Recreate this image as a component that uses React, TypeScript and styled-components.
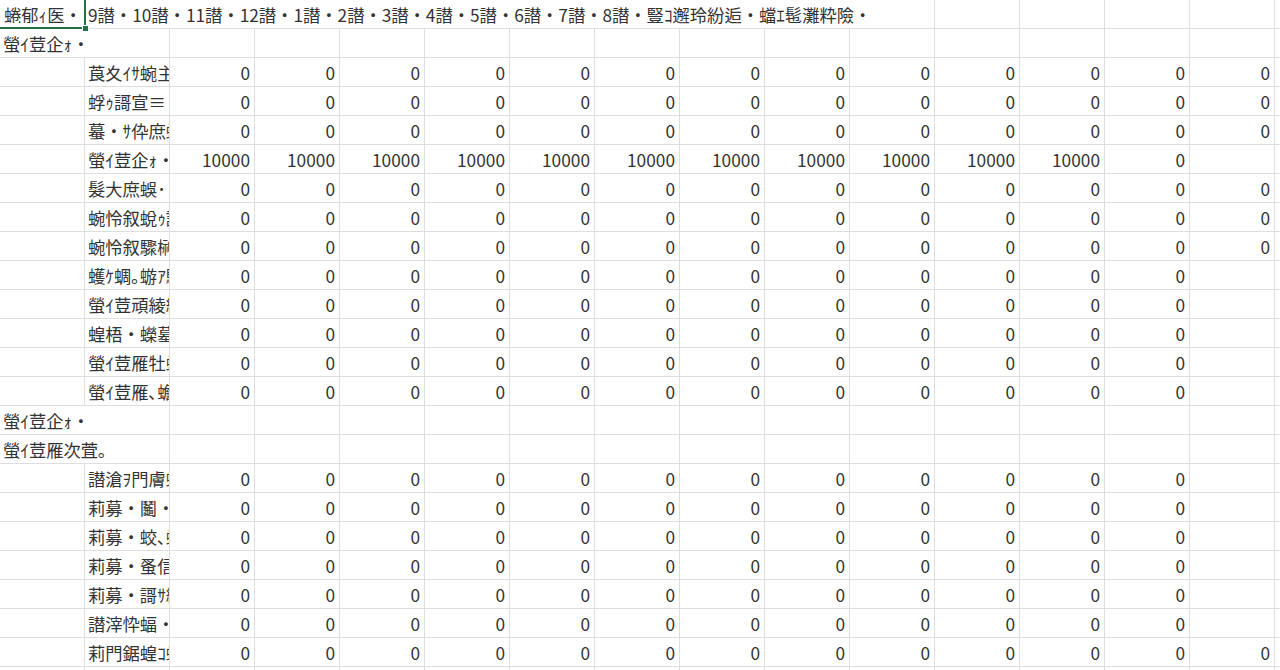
import React from "react";
import styled, { createGlobalStyle } from "styled-components";

const Global = createGlobalStyle`
  html, body { margin: 0; padding: 0; background: #ffffff; overflow: hidden; }
  body { font-family: "Noto Sans CJK JP", "Noto Sans", sans-serif; }
`;

const Sheet = styled.div`
  display: grid;
  grid-template-columns: repeat(16, 85px);
  grid-auto-rows: 29px;
  width: 1280px;
  height: 670px;
  overflow: hidden;
  font-family: "Noto Sans CJK JP", "Noto Sans", sans-serif;
  font-size: 17.3px;
  color: #333333;
  background: #ffffff;
`;

const Cell = styled.div<{ $span?: number; $num?: boolean; $noRight?: boolean }>`
  box-sizing: border-box;
  grid-column: span ${(p) => p.$span ?? 1};
  border-right: 1px solid ${(p) => (p.$noRight ? "transparent" : "#dedede")};
  border-bottom: 1px solid #dedede;
  display: flex;
  align-items: center;
  justify-content: ${(p) => (p.$num ? "flex-end" : "flex-start")};
  padding: ${(p) => (p.$num ? "1px 4px 0 0" : "1px 0 0 3px")};
  white-space: nowrap;
  overflow: hidden;
  line-height: 1;
`;

const SelectedCell = styled.div`
  box-sizing: border-box;
  position: relative;
  border-bottom: 1px solid #dedede;
  display: flex;
  align-items: center;
  padding: 1px 0 0 4px;
  white-space: nowrap;
  line-height: 1;
`;

const Clip = styled.span`
  display: block;
  overflow: hidden;
  width: 80px;
`;

const Selection = styled.div`
  position: absolute;
  top: -2px;
  left: -2px;
  right: -1px;
  bottom: -1px;
  border: 2px solid #217346;
  pointer-events: none;
`;

const Handle = styled.div`
  position: absolute;
  right: -4px;
  bottom: -4px;
  width: 5px;
  height: 5px;
  background: #217346;
  border: 1px solid #ffffff;
`;

type DataRow =
  | { kind: "section"; label: string }
  | { kind: "data"; label: string; values: (string | null)[] }
  | { kind: "empty" };

const z = (n: number, total = 13): (string | null)[] =>
  Array.from({ length: total }, (_, i) => (i < n ? "0" : null));

const rows: DataRow[] = [
  { kind: "section", label: "螢ｲ荳企ｫ・" },
  { kind: "data", label: "莨夊ｲｻ蜿主・", values: z(13) },
  { kind: "data", label: "蜉ｩ謌宣≡・", values: z(13) },
  { kind: "data", label: "蟇・ｻ伜庶蜈･", values: z(13) },
  {
    kind: "data",
    label: "螢ｲ荳企ｫ・",
    values: [...Array(11).fill("10000"), "0", null],
  },
  { kind: "data", label: "髮大庶蜈･・", values: z(13) },
  { kind: "data", label: "蜿怜叙蛻ｩ諱ｯ", values: z(13) },
  { kind: "data", label: "蜿怜叙驟榊ｽ・", values: z(13) },
  { kind: "data", label: "蠖ｹ蜩｡蝣ｱ驟ｬ", values: z(12) },
  { kind: "data", label: "螢ｲ荳頑綾繧・", values: z(12) },
  { kind: "data", label: "蝗梧・蠑墓ｸ", values: z(12) },
  { kind: "data", label: "螢ｲ荳雁牡蠑・", values: z(12) },
  { kind: "data", label: "螢ｲ荳雁､蟾ｮ", values: z(12) },
  { kind: "section", label: "螢ｲ荳企ｫ・" },
  { kind: "section", label: "螢ｲ荳雁次萓｡" },
  { kind: "data", label: "譛滄ｦ門膚蜩・", values: z(12) },
  { kind: "data", label: "莉募・鬮・・", values: z(12) },
  { kind: "data", label: "莉募・蛟､蠑・", values: z(12) },
  { kind: "data", label: "莉募・蚤信", values: z(12) },
  { kind: "data", label: "莉募・謌ｻ縺・", values: z(12) },
  { kind: "data", label: "譛滓忰蝠・・", values: z(12) },
  { kind: "data", label: "莉門鋸蝗ｺ螳", values: z(13) },
  { kind: "empty" },
];

const headerText =
  "9譛・10譛・11譛・12譛・1譛・2譛・3譛・4譛・5譛・6譛・7譛・8譛・豎ｺ邂玲紛逅・蟷ｴ髢灘粋險・";

export default function App() {
  return (
    <>
      <Global />
      <Sheet>
        <SelectedCell>
          <Clip>蜷郁ｨ医・</Clip>
          <Selection />
          <Handle />
        </SelectedCell>
        <Cell $span={10}>{headerText}</Cell>
        {Array.from({ length: 5 }, (_, i) => (
          <Cell key={`h${i}`} />
        ))}
        {rows.map((r, ri) => {
          if (r.kind === "section") {
            return (
              <React.Fragment key={ri}>
                <Cell $span={2}>{r.label}</Cell>
                {Array.from({ length: 14 }, (_, i) => (
                  <Cell key={i} />
                ))}
              </React.Fragment>
            );
          }
          if (r.kind === "empty") {
            return (
              <React.Fragment key={ri}>
                {Array.from({ length: 16 }, (_, i) => (
                  <Cell key={i} />
                ))}
              </React.Fragment>
            );
          }
          return (
            <React.Fragment key={ri}>
              <Cell />
              <Cell>{r.label}</Cell>
              {r.values.map((v, i) => (
                <Cell key={i} $num>
                  {v}
                </Cell>
              ))}
              <Cell />
            </React.Fragment>
          );
        })}
      </Sheet>
    </>
  );
}
